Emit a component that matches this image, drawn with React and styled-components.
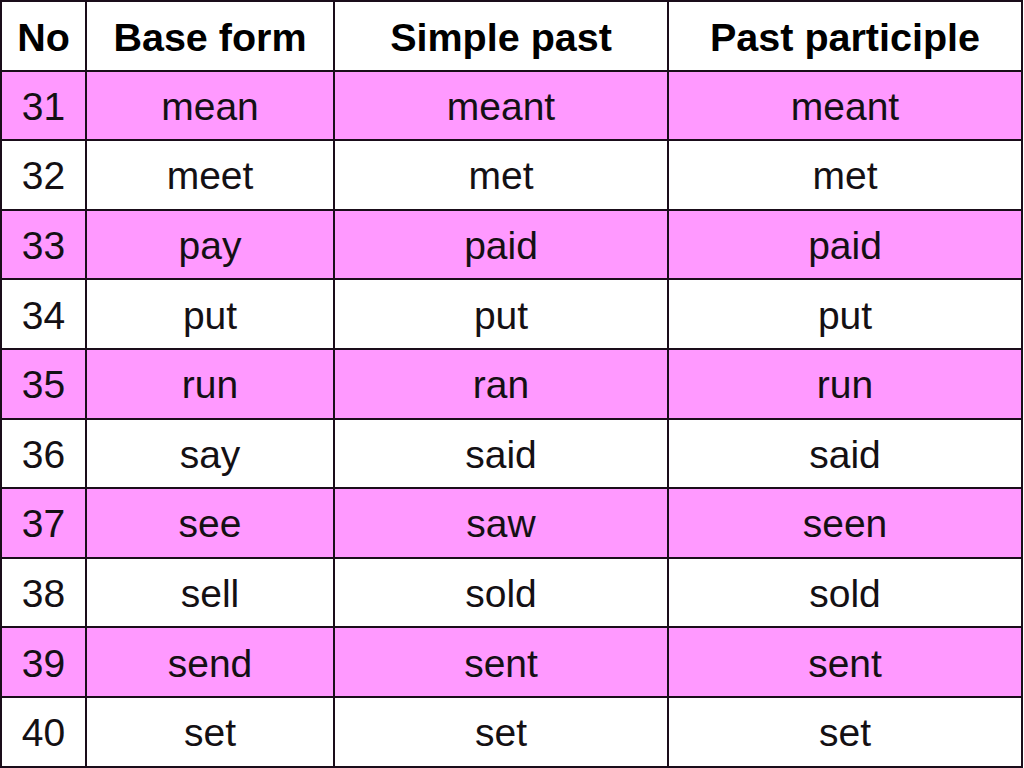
import React from 'react'
import styled, { createGlobalStyle } from 'styled-components'

const rows = [
    ['31', 'mean', 'meant', 'meant'],
    ['32', 'meet', 'met', 'met'],
    ['33', 'pay', 'paid', 'paid'],
    ['34', 'put', 'put', 'put'],
    ['35', 'run', 'ran', 'run'],
    ['36', 'say', 'said', 'said'],
    ['37', 'see', 'saw', 'seen'],
    ['38', 'sell', 'sold', 'sold'],
    ['39', 'send', 'sent', 'sent'],
    ['40', 'set', 'set', 'set'],
]

function App() {
    return (
        <>
            <GlobalStyle />
            <Table>
                <colgroup>
                    <col style={{ width: 85 }} />
                    <col style={{ width: 248 }} />
                    <col style={{ width: 334 }} />
                    <col />
                </colgroup>
                <thead>
                    <Row>
                        <HeadCell>No</HeadCell>
                        <HeadCell>Base form</HeadCell>
                        <HeadCell>Simple past</HeadCell>
                        <HeadCell>Past participle</HeadCell>
                    </Row>
                </thead>
                <tbody>
                    {rows.map((r, i) => (
                        <Row key={r[0]} pink={i % 2 === 0}>
                            {r.map((text, j) => (
                                <Cell key={j}>{text}</Cell>
                            ))}
                        </Row>
                    ))}
                </tbody>
            </Table>
        </>
    )
}

export default App

const GlobalStyle = createGlobalStyle`
    html, body {
        margin:0;
        padding:0;
        background:white;
        overflow:hidden;
    }
`;

const Table = styled.table`
    width:1023px;
    table-layout:fixed;
    border-collapse:collapse;
    font-family:"Liberation Sans", Arial, sans-serif;
    color:#141014;
`;

const Row = styled.tr`
    height:69.6px;
    background-color:${({ pink }) => pink ? '#ff99ff' : 'white'};
`;

const HeadCell = styled.th`
    border:2px solid #1a0d1a;
    font-size:39.5px;
    font-weight:700;
    text-align:center;
    vertical-align:middle;
    padding:3px 0 0;
    color:#000;
`;

const Cell = styled.td`
    border:2px solid #1a0d1a;
    font-size:39px;
    font-weight:400;
    text-align:center;
    vertical-align:middle;
    padding:3px 0 0;
`;
